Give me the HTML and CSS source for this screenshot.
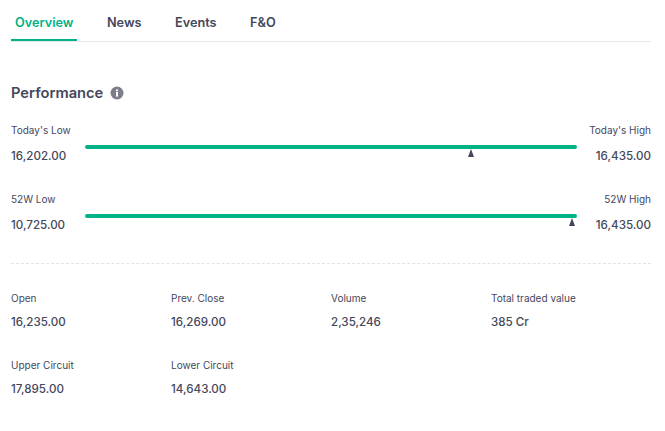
FILE: index.html
```html
<!DOCTYPE html>
<html lang="en">
<head>
<meta charset="utf-8">
<title>Performance</title>
<link rel="stylesheet" href="styles.css">
</head>
<body>
<main class="page">
  <nav class="tabs">
    <a class="tab active">Overview</a>
    <a class="tab">News</a>
    <a class="tab">Events</a>
    <a class="tab">F&amp;O</a>
  </nav>
  <h2 class="title">Performance
    <svg class="info" width="14" height="14" viewBox="0 0 14 14"><circle cx="7" cy="7" r="6.5" fill="#7c7e8c"/><rect x="6" y="6" width="2" height="4.6" fill="#fff"/><rect x="6" y="3.4" width="2" height="1.8" fill="#fff"/></svg>
  </h2>
  <section class="ranges">
    <div class="range">
      <div class="end"><span class="label">Today's Low</span><span class="value">16,202.00</span></div>
      <div class="track"><div class="bar"></div><span class="marker" style="left:78.5%"></span></div>
      <div class="end right"><span class="label">Today's High</span><span class="value">16,435.00</span></div>
    </div>
    <div class="range">
      <div class="end"><span class="label">52W Low</span><span class="value">10,725.00</span></div>
      <div class="track"><div class="bar"></div><span class="marker" style="left:99%"></span></div>
      <div class="end right"><span class="label">52W High</span><span class="value">16,435.00</span></div>
    </div>
  </section>
  <section class="stats">
    <div class="stat"><span class="label">Open</span><span class="value">16,235.00</span></div>
    <div class="stat"><span class="label">Prev. Close</span><span class="value">16,269.00</span></div>
    <div class="stat"><span class="label">Volume</span><span class="value">2,35,246</span></div>
    <div class="stat"><span class="label">Total traded value</span><span class="value">385 Cr</span></div>
    <div class="stat"><span class="label">Upper Circuit</span><span class="value">17,895.00</span></div>
    <div class="stat"><span class="label">Lower Circuit</span><span class="value">14,643.00</span></div>
  </section>
</main>
</body>
</html>
```
FILE: styles.css
```css
* { box-sizing: border-box; }
html, body { margin: 0; padding: 0; background: #fff; }
body { font-family: Inter, "Noto Sans", sans-serif; color: #44475b; }
.page { width: 665px; height: 431px; padding: 0 14px 0 11px; overflow: hidden; }
.tabs { display: flex; gap: 25.5px; height: 42px; border-bottom: 1px solid #e9e9eb; }
.tab { display: block; height: 41px; padding: 14px 4px 0; font-size: 12.7px; line-height: 17px; font-weight: 600; color: #44475b; }
.tab.active { color: #00b386; border-bottom: 2px solid #00b386; }
.title { display: flex; align-items: center; gap: 7px; margin: 41px 0 0; height: 20px; font-size: 14.7px; line-height: 20px; font-weight: 600; color: #44475b; }
.ranges { margin-top: 21px; height: 140px; border-bottom: 1px dashed #e3e3e6; display: flex; flex-direction: column; gap: 23px; }
.range { display: flex; height: 46px; }
.end { width: 74px; display: flex; flex-direction: column; flex: none; }
.end.right { align-items: flex-end; }
.track { position: relative; flex: 1; }
.bar { height: 4px; margin-top: 21px; border-radius: 2px; background: #00b386; }
.marker { position: absolute; top: 25px; width: 0; height: 0; margin-left: -3.5px; border-left: 3.5px solid transparent; border-right: 3.5px solid transparent; border-bottom: 8px solid #44475b; }
.label { font-size: 10px; line-height: 12px; color: #44475b; }
.value { margin-top: 12px; font-size: 11.6px; line-height: 16px; font-weight: 500; color: #44475b; }
.stats { display: grid; grid-template-columns: repeat(4, 160px); row-gap: 26px; margin-top: 28px; }
.stat { display: flex; flex-direction: column; height: 41px; }
.stat .value { margin-top: 10px; }
```
